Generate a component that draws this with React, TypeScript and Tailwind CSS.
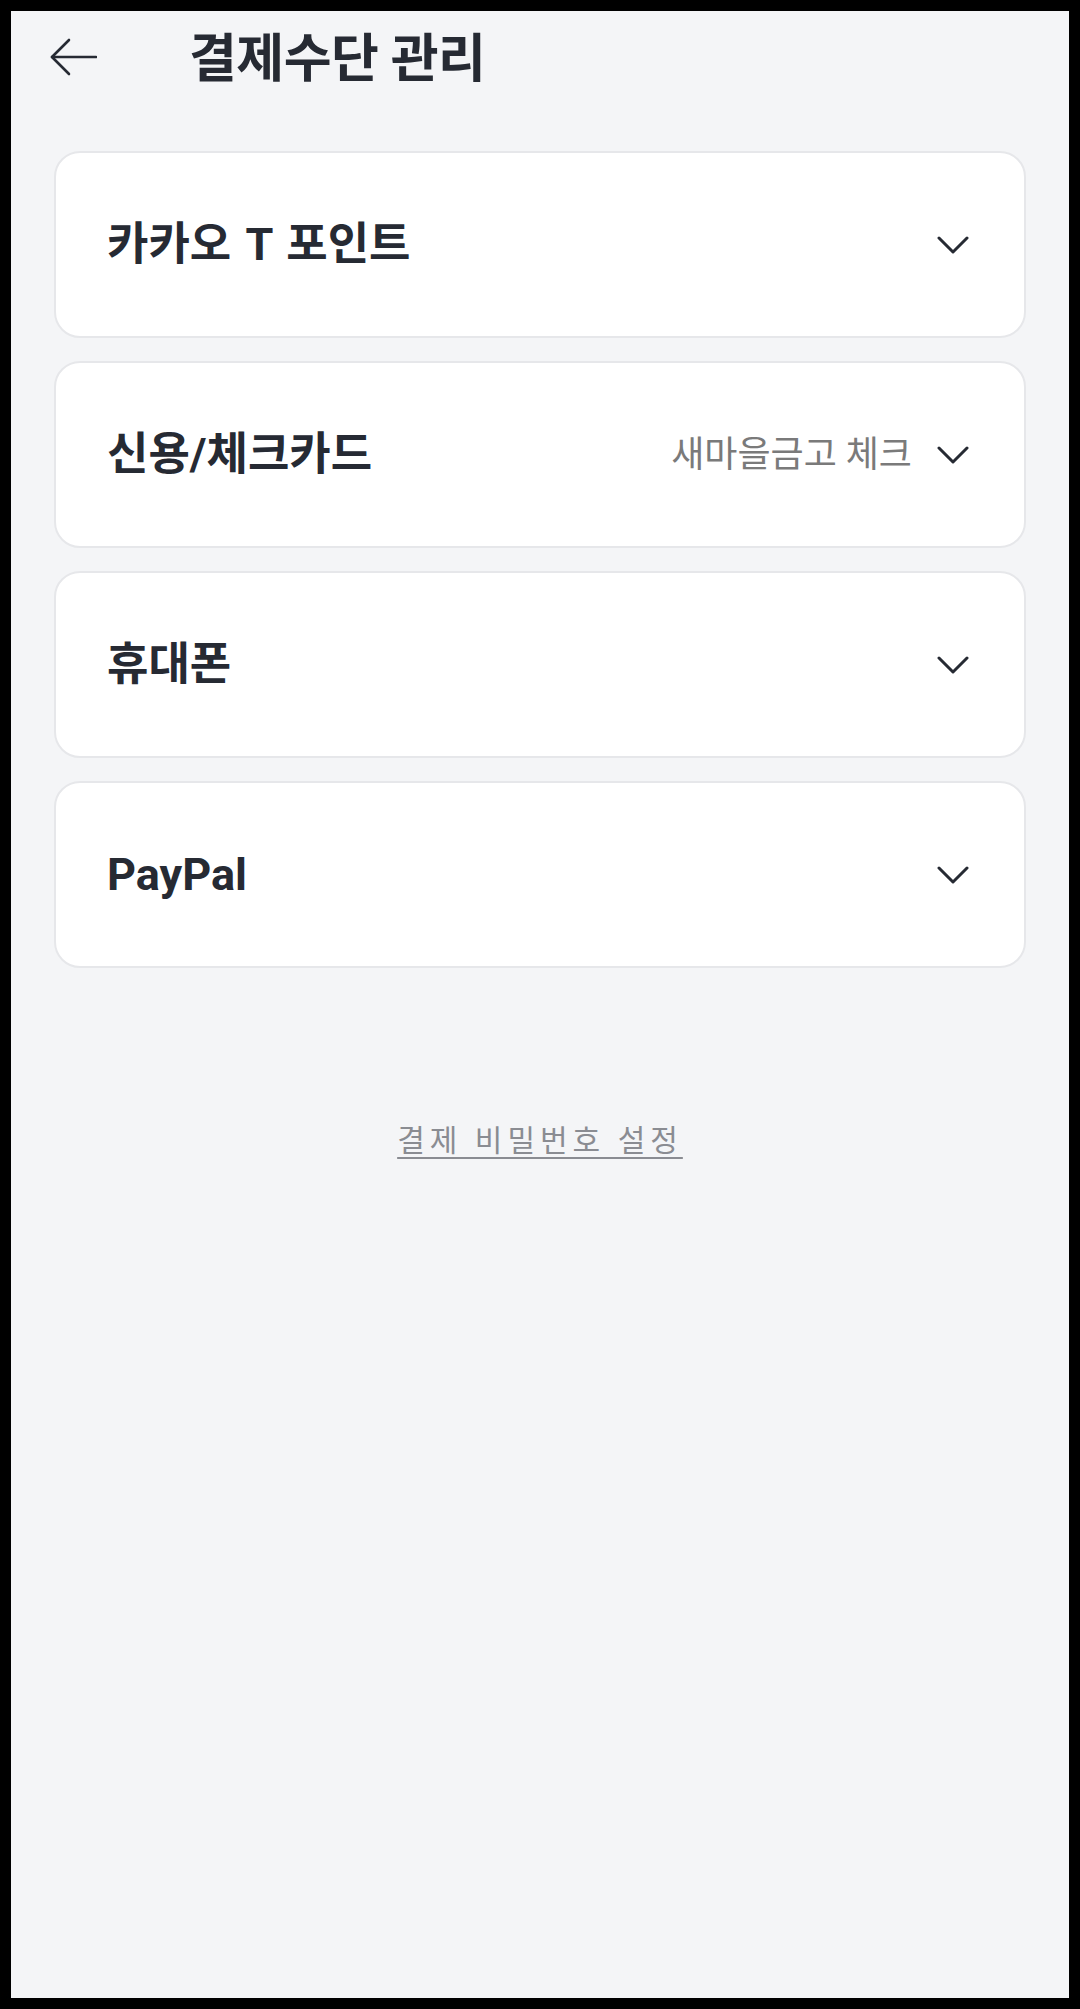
import React from 'react'

const font = { fontFamily: 'Roboto, "Noto Sans CJK KR", sans-serif' }

function Chevron() {
  return (
    <svg width="32" height="18" viewBox="0 0 32 18" fill="none">
      <path d="M2 2 L16 16 L30 2" stroke="#262a33" strokeWidth="3" strokeLinecap="round" strokeLinejoin="round" />
    </svg>
  )
}

function BackArrow() {
  return (
    <svg width="48" height="38" viewBox="0 0 48 38" fill="none">
      <path d="M3 19 H47" stroke="#262a33" strokeWidth="2.6" strokeLinecap="round" />
      <path d="M20 2 L3 19 L20 36" stroke="#262a33" strokeWidth="2.6" strokeLinecap="round" strokeLinejoin="round" />
    </svg>
  )
}

const methods = [
  { name: '카카오 T 포인트', sub: '' },
  { name: '신용/체크카드', sub: '새마을금고 체크' },
  { name: '휴대폰', sub: '' },
  { name: 'PayPal', sub: '' },
]

export default function App() {
  return (
    <div className="min-h-screen bg-black p-[11px]" style={font}>
      <div className="h-[1987px] bg-[#f4f5f7] flex flex-col">
        {/* 헤더 */}
        <div className="h-[140px] flex items-start pt-[21px] pl-[38px]">
          <div className="mt-[6px]">
            <BackArrow />
          </div>
          <h1 className="ml-[92px] text-[52px] leading-[56px] font-bold text-[#262a33] tracking-[-0.5px]">
            결제수단 관리
          </h1>
        </div>

        {/* 결제수단 목록 */}
        <div className="flex flex-col gap-[23px] px-[43px]">
          {methods.map((m) => (
            <div
              key={m.name}
              className="h-[187px] bg-white border-2 border-[#e6e7ea] rounded-[26px] flex items-center pl-[51px] pr-[55px]"
            >
              <span className="text-[45px] font-bold text-[#262a33] leading-none [word-spacing:3px]">{m.name}</span>
              <div className="ml-auto flex items-center">
                {m.sub && (
                  <span className="text-[36px] text-[#7a7a7a] mr-[25px] leading-none">{m.sub}</span>
                )}
                <Chevron />
              </div>
            </div>
          ))}
        </div>

        <div className="mt-[153px] flex justify-center">
          <a className="text-[30px] leading-[40px] tracking-[5px] text-[#8a8c92] underline underline-offset-[6px] decoration-2">
            결제 비밀번호 설정
          </a>
        </div>
      </div>
    </div>
  )
}
